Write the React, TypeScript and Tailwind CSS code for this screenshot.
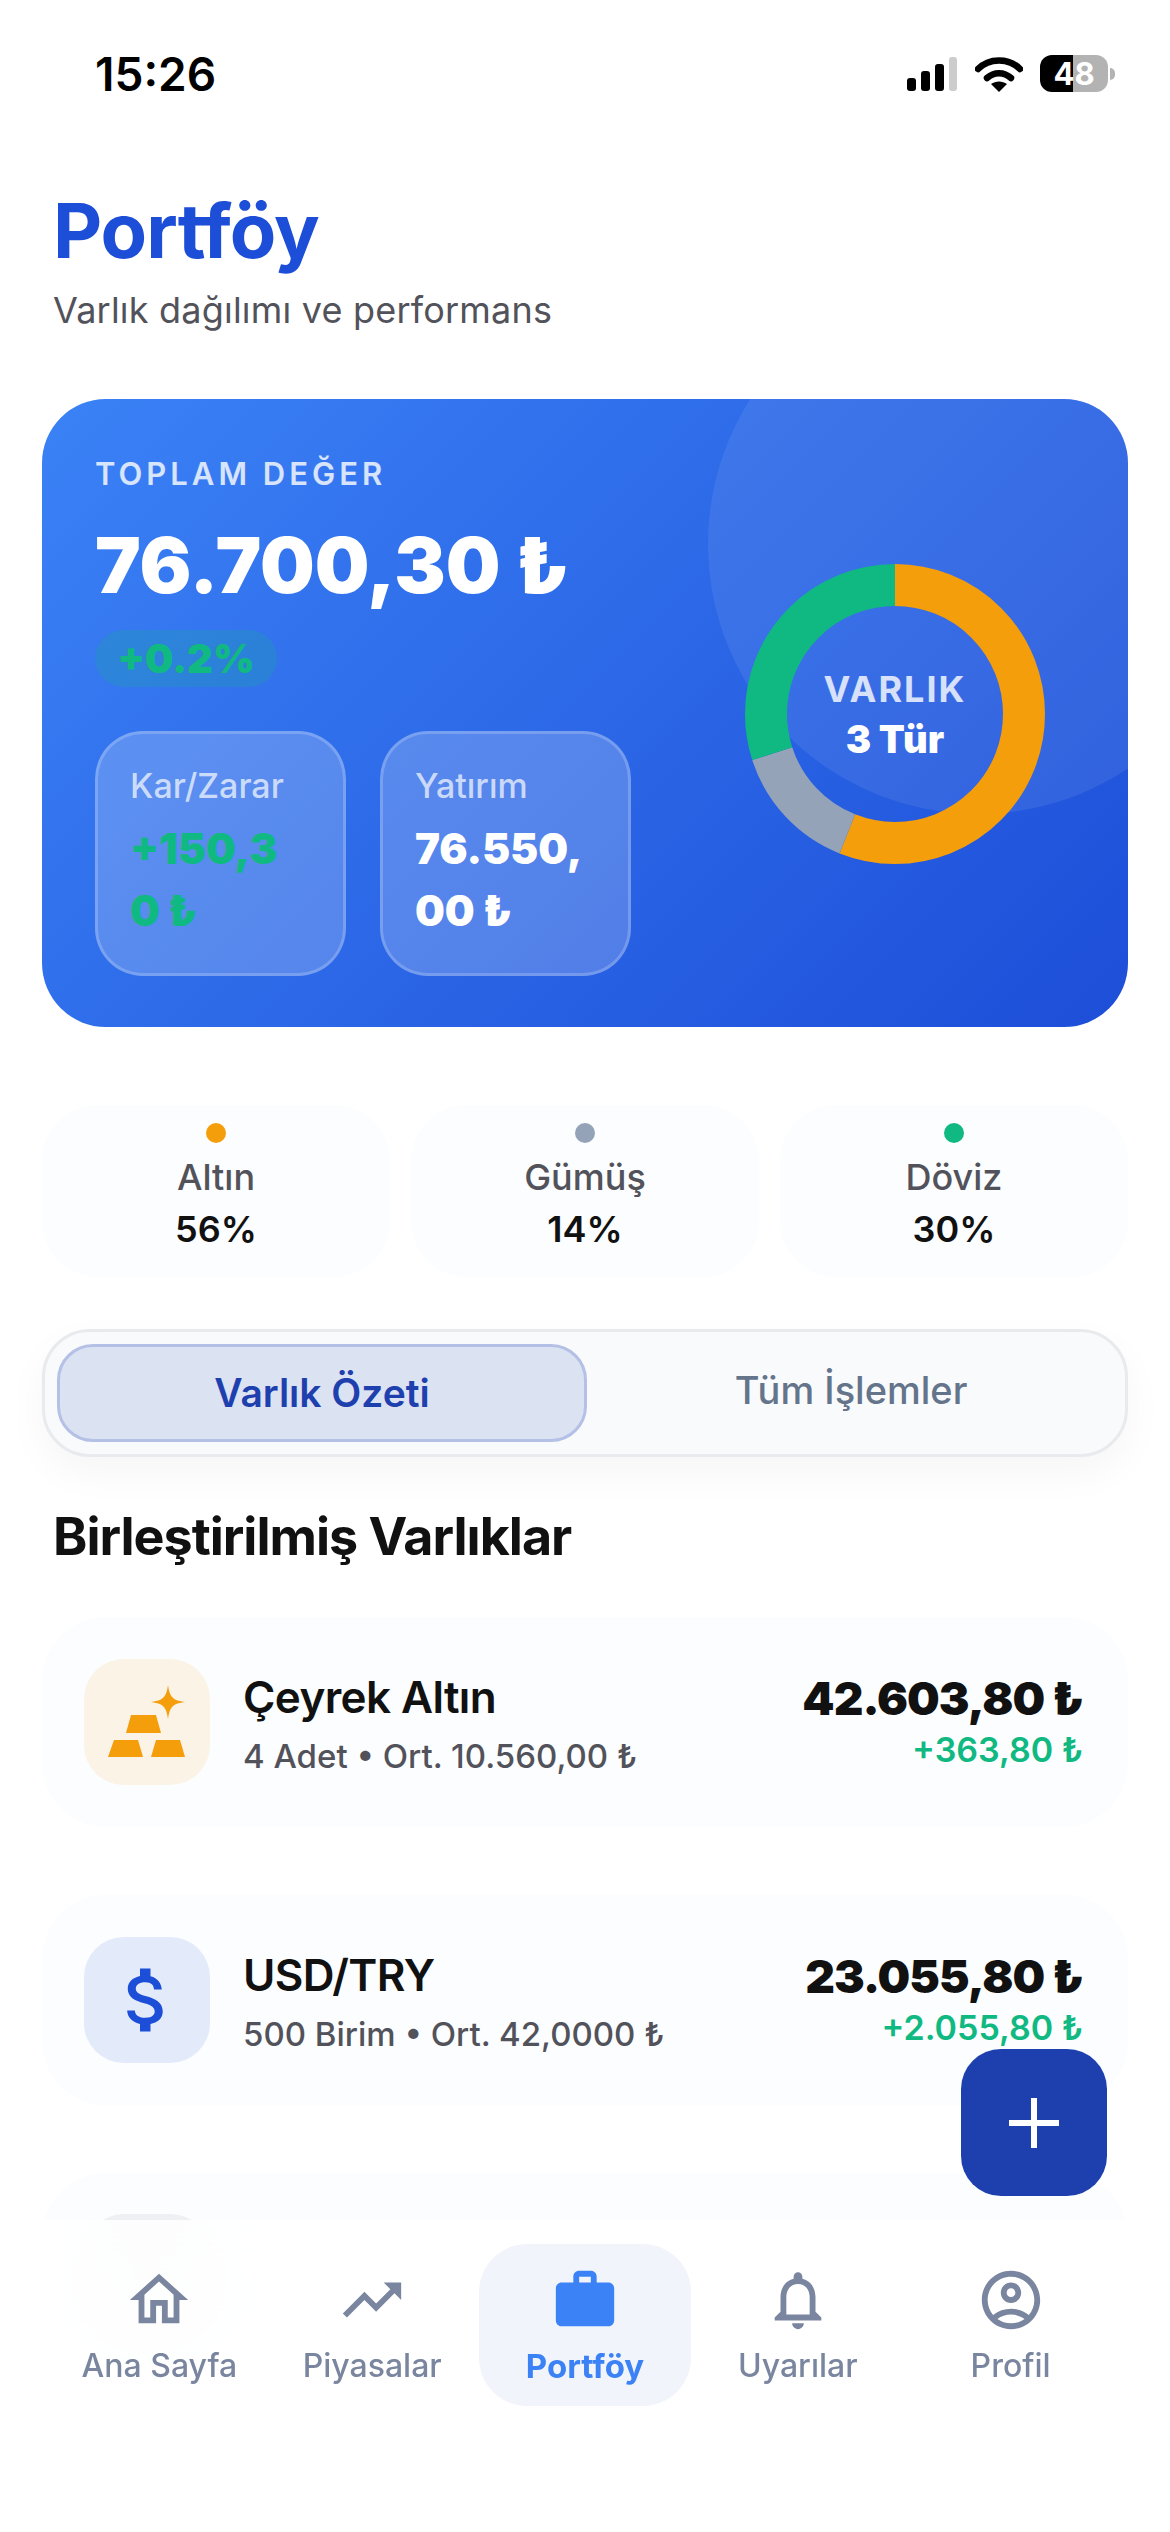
import { MdAttachMoney, MdOutlineAccountCircle, MdOutlineHome, MdOutlineNotifications, MdTrendingUp, MdWork } from "react-icons/md";

const allocation = [
    { label: "Altın", value: "56%", dot: "bg-[#f59e0b]" },
    { label: "Gümüş", value: "14%", dot: "bg-[#94a3b8]" },
    { label: "Döviz", value: "30%", dot: "bg-[#10b981]" },
];

const navItems = [
    { label: "Ana Sayfa", icon: MdOutlineHome, active: false },
    { label: "Piyasalar", icon: MdTrendingUp, active: false },
    { label: "Portföy", icon: MdWork, active: true },
    { label: "Uyarılar", icon: MdOutlineNotifications, active: false },
    { label: "Profil", icon: MdOutlineAccountCircle, active: false },
];

function StatusBar() {
    return (
        <div className="flex h-[185px] items-start justify-between pl-[95px] pr-[55px] pt-[46px]">
            <span className="text-[46px] leading-[56px] font-semibold text-black">15:26</span>
            <div className="flex items-center pt-[9px]">
                <svg width="50" height="34" viewBox="0 0 50 34">
                    <rect x="0" y="21" width="9" height="13" rx="3" fill="#000" />
                    <rect x="14" y="14" width="9" height="20" rx="3" fill="#000" />
                    <rect x="28" y="7" width="9" height="27" rx="3" fill="#000" />
                    <rect x="42" y="0" width="8" height="34" rx="3" fill="#cccccc" />
                </svg>
                <svg className="ml-[18px]" width="48" height="36" viewBox="0 0 48 36" fill="none">
                    <path d="M3 13C14 1.5 34 1.5 45 13" stroke="#000" strokeWidth="6.5" strokeLinecap="round" />
                    <path d="M12 22C19 15.5 29 15.5 36 22" stroke="#000" strokeWidth="6.5" strokeLinecap="round" />
                    <path d="M24 36L16 28C20.5 24.5 27.5 24.5 32 28Z" fill="#000" />
                </svg>
                <span className="ml-[17px] flex h-[37px] w-[68px] items-center justify-center rounded-[12px] bg-[linear-gradient(90deg,#000_48%,#b3b3b3_48%)] text-[31px] leading-none font-bold text-white">
                    48
                </span>
                <span className="ml-[2px] h-[12px] w-[5px] rounded-r-full bg-[#b3b3b3]" />
            </div>
        </div>
    );
}

function Donut() {
    return (
        <div className="relative flex h-[300px] w-[300px] items-center justify-center">
            <svg className="absolute inset-0 -rotate-90" width="300" height="300" viewBox="0 0 300 300" fill="none">
                <circle cx="150" cy="150" r="129" stroke="#f59e0b" strokeWidth="42" strokeDasharray="453.9 810.5" />
                <circle cx="150" cy="150" r="129" stroke="#94a3b8" strokeWidth="42" strokeDasharray="113.5 810.5" strokeDashoffset="-453.9" />
                <circle cx="150" cy="150" r="129" stroke="#10b981" strokeWidth="42" strokeDasharray="243.1 810.5" strokeDashoffset="-567.4" />
            </svg>
            <div className="flex flex-col items-center">
                <span className="text-[36px] leading-[50px] font-bold tracking-[2px] text-white/80">VARLIK</span>
                <span className="text-[38px] leading-[50px] font-black text-white">3 Tür</span>
            </div>
        </div>
    );
}

function StatBox({ label, value, valueClass }: { label: string; value: string; valueClass: string }) {
    return (
        <div className="h-[245px] w-[251px] rounded-[48px] border-[3px] border-white/20 bg-white/20 pb-[30px] pl-[32px] pr-[41px] pt-[30px]">
            <div className="text-[34px] leading-[44px] font-medium text-white/70">{label}</div>
            <div className={`mt-[10px] text-[42px] leading-[62px] font-black wrap-anywhere ${valueClass}`}>{value}</div>
        </div>
    );
}

function HeroCard() {
    return (
        <div className="relative mx-[42px] mt-[64px] flex items-center justify-between overflow-hidden rounded-[64px] bg-[linear-gradient(135deg,#3b82f6,#1d4ed8)] pb-[51px] pl-[53px] pr-[83px] pt-[53px]">
            <div className="absolute -right-[120px] -top-[125px] h-[540px] w-[540px] rounded-full bg-white/[0.08]" />
            <div className="relative w-[536px]">
                <div className="text-[31px] leading-[44px] font-semibold tracking-[4px] text-white/80">TOPLAM DEĞER</div>
                <div className="mt-[23px] text-[77px] leading-[92px] font-black whitespace-nowrap text-white">76.700,30 ₺</div>
                <div className="mt-[19px] flex h-[57px] w-[182px] items-center justify-center rounded-full bg-[#10b981]/20 text-[40px] font-black text-[#10b981]">
                    +0.2%
                </div>
                <div className="mt-[44px] flex justify-between">
                    <StatBox label="Kar/Zarar" value="+150,30 ₺" valueClass="text-[#10b981]" />
                    <StatBox label="Yatırım" value="76.550,00 ₺" valueClass="text-white" />
                </div>
            </div>
            <div className="relative">
                <Donut />
            </div>
        </div>
    );
}

function GoldIcon() {
    return (
        <svg width="126" height="126" viewBox="0 0 126 126" fill="#f59e0b">
            <polygon points="47,56 72,56 77,74 42,74" />
            <polygon points="30,81 54,81 59,98 24,98" />
            <polygon points="72,81 96,81 101,98 67,98" />
            <path d="M84 26C85.5 38 89 41.5 101 43C89 44.5 85.5 48 84 60C82.5 48 79 44.5 67 43C79 41.5 82.5 38 84 26Z" />
        </svg>
    );
}

function AssetCard({
    icon,
    iconBg,
    name,
    detail,
    total,
    gain,
}: {
    icon: React.ReactNode;
    iconBg: string;
    name: string;
    detail: string;
    total: string;
    gain: string;
}) {
    return (
        <div className="flex h-[210px] items-center rounded-[64px] bg-[#fbfdfe] pl-[42px] pr-[45px]">
            <div className={`flex h-[126px] w-[126px] shrink-0 items-center justify-center rounded-[40px] ${iconBg}`}>{icon}</div>
            <div className="ml-[33px] flex-1 pt-[8px]">
                <div className="text-[44px] leading-[58px] font-semibold tracking-[-0.6px] text-[#111111]">{name}</div>
                <div className="mt-[1px] text-[33px] leading-[58px] font-medium text-[#52525b]">{detail}</div>
            </div>
            <div className="flex flex-col items-end self-start pt-[52px]">
                <div className="text-[46px] leading-[58px] font-black tracking-[-1px] text-[#111111]">{total}</div>
                <div className="-mt-[2px] text-[34px] leading-[50px] font-semibold text-[#10b981]">{gain}</div>
            </div>
        </div>
    );
}

function BottomNav() {
    return (
        <div className="absolute inset-x-0 bottom-0 top-[2220px] bg-white/85 px-[53px] pt-[24px] backdrop-blur-2xl">
            <div className="grid grid-cols-5">
                {navItems.map((item) => {
                    const Icon = item.icon;
                    return (
                        <div
                            key={item.label}
                            className={`flex h-[162px] flex-col items-center rounded-[48px] pt-[21px] ${item.active ? "bg-[#f1f4fa]" : ""}`}
                        >
                            <Icon size={70} color={item.active ? "#3b82f6" : "#7a869f"} />
                            <span
                                className={`mt-[9px] leading-[44px] ${item.active ? "text-[33px] font-bold text-[#3b82f6]" : "text-[32px] font-medium text-[#7a869f]"}`}
                            >
                                {item.label}
                            </span>
                        </div>
                    );
                })}
            </div>
        </div>
    );
}

export default function App() {
    return (
        <div className="relative h-[2532px] w-[1170px] overflow-hidden bg-white font-['Inter',sans-serif]">
            <StatusBar />
            <div className="px-[53px]">
                <h1 className="text-[76px] leading-[90px] font-bold tracking-[-1px] text-[#1d4ed8]">Portföy</h1>
                <p className="mt-[10px] text-[36px] leading-[50px] tracking-[0.2px] text-[#52525b]">Varlık dağılımı ve performans</p>
            </div>
            <HeroCard />

            <div className="mx-[42px] mt-[78px] grid grid-cols-3 gap-[21px]">
                {allocation.map((a) => (
                    <div key={a.label} className="flex h-[172px] flex-col items-center rounded-[56px] bg-[#fbfdfe] pt-[18px]">
                        <span className={`h-[20px] w-[20px] rounded-full ${a.dot}`} />
                        <span className="mt-[9px] text-[36px] leading-[50px] font-medium text-[#52525b]">{a.label}</span>
                        <span className="mt-[2px] text-[36px] leading-[50px] font-semibold text-[#111111]">{a.value}</span>
                    </div>
                ))}
            </div>

            <div className="mx-[42px] mt-[52px] flex h-[128px] items-center rounded-[48px] border-[3px] border-[#e8eaee] bg-[#f8fafc] pl-[12px] shadow-[0_16px_40px_rgba(15,23,42,0.04)]">
                <div className="flex h-[98px] w-[530px] items-center justify-center rounded-[36px] border-[3px] border-[#b4c0e6] bg-[#dbe2f1] text-[39px] font-semibold text-[#1e40af]">
                    Varlık Özeti
                </div>
                <div className="flex-1 pb-[6px] pr-[10px] text-center text-[38px] font-medium text-[#64748b]">Tüm İşlemler</div>
            </div>

            <h2 className="mx-[53px] mt-[48px] text-[52px] leading-[64px] font-bold tracking-[-1px] text-[#111111]">Birleştirilmiş Varlıklar</h2>

            <div className="mx-[42px] mt-[48px] flex flex-col gap-[68px]">
                <AssetCard
                    icon={<GoldIcon />}
                    iconBg="bg-[#faf3e6]"
                    name="Çeyrek Altın"
                    detail="4 Adet • Ort. 10.560,00 ₺"
                    total="42.603,80 ₺"
                    gain="+363,80 ₺"
                />
                <AssetCard
                    icon={<MdAttachMoney size={84} color="#1d4ed8" />}
                    iconBg="bg-[#e3ebfa]"
                    name="USD/TRY"
                    detail="500 Birim • Ort. 42,0000 ₺"
                    total="23.055,80 ₺"
                    gain="+2.055,80 ₺"
                />
                <div className="h-[210px] rounded-[64px] bg-[#fbfdfe] pl-[42px] pt-[41px]">
                    <div className="h-[126px] w-[126px] rounded-[40px] bg-[#eef0f3]" />
                </div>
            </div>

            <BottomNav />

            <div className="absolute left-[961px] top-[2049px] flex h-[147px] w-[146px] items-center justify-center rounded-[40px] bg-[#1e40af]">
                <svg width="50" height="50" viewBox="0 0 50 50" stroke="#fff" strokeWidth="6">
                    <path d="M25 0V50M0 25H50" />
                </svg>
            </div>
        </div>
    );
}
